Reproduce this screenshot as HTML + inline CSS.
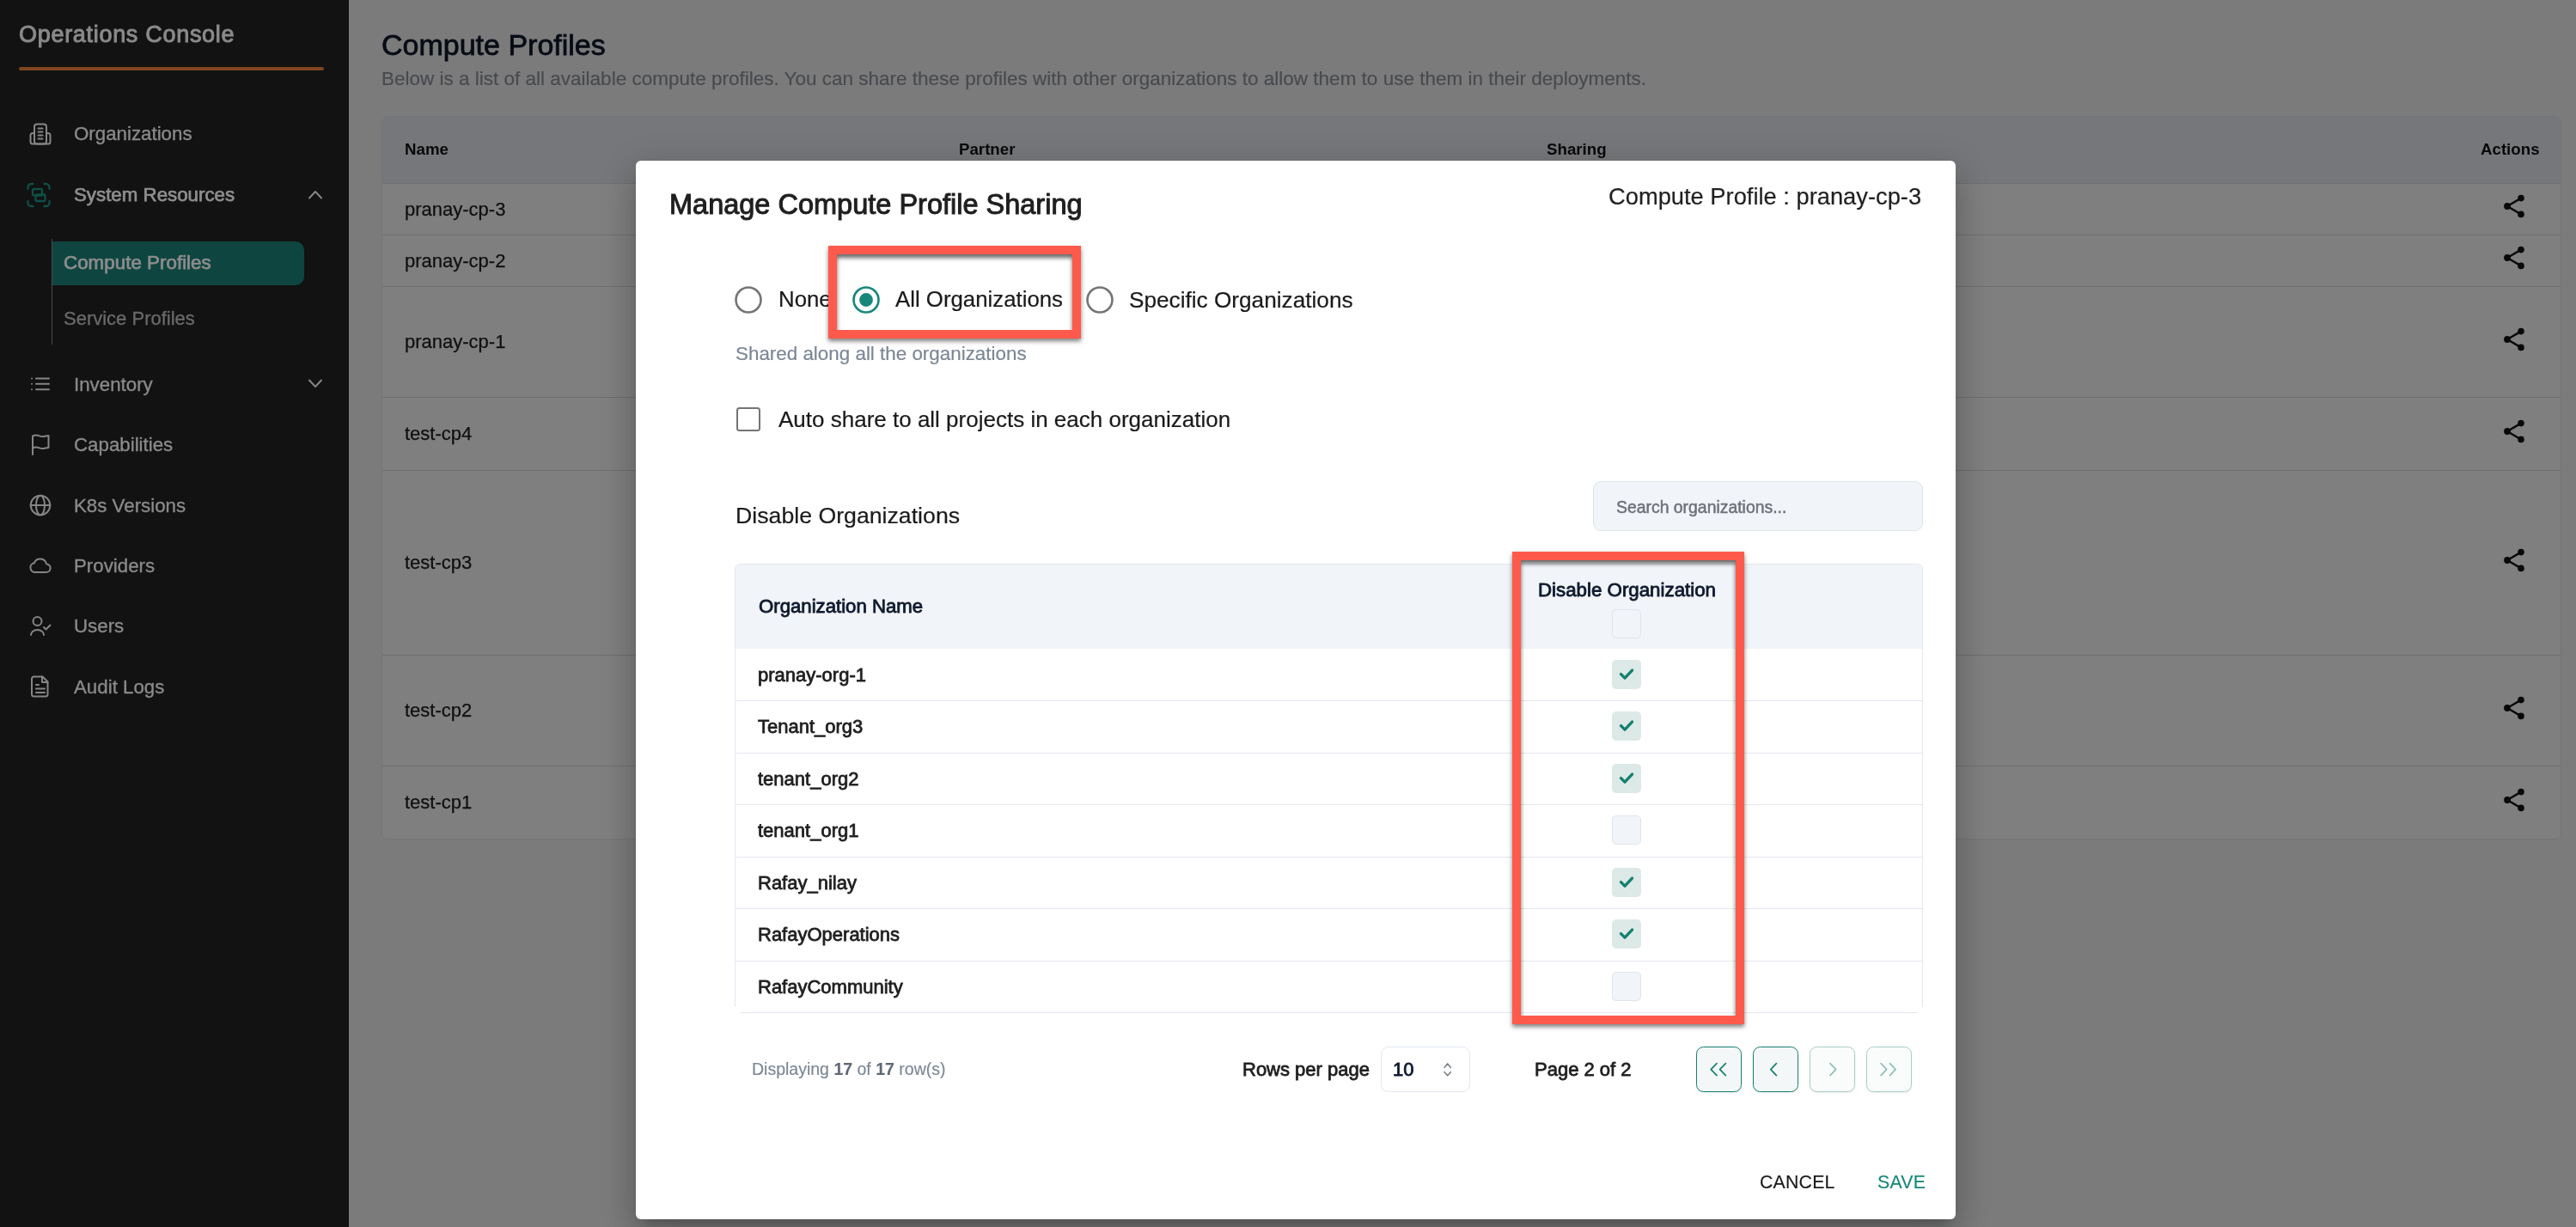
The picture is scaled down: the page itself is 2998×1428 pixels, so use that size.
<!DOCTYPE html>
<html><head><meta charset="utf-8">
<style>
*{box-sizing:border-box;margin:0;padding:0}
html,body{width:2998px;height:1428px;overflow:hidden;background:#fff;font-family:"Liberation Sans",sans-serif}
.t{position:absolute;line-height:1;white-space:nowrap;will-change:transform}
.ic{position:absolute;overflow:visible}
.hl{position:absolute;left:0;width:100%;height:1px;background:#dcdee2}
.cb{position:absolute;width:34px;height:34px;border-radius:5px}
.cb.off{background:#f1f4f8;border:1px solid #dfe5ec}
.cb.on{background:#dde9e6}
.rl{position:absolute;left:855px;width:1383px;height:1px;background:#e3e8ef}
.pb{position:absolute;top:1218px;width:53px;height:53px;border-radius:8.5px;border:1.5px solid #16806f;background:#f3f7f7;box-shadow:0 1px 2px rgba(0,0,0,.08)}
.pb.dis{border-color:#a6cfc8;background:#fafcfc}
.red{position:absolute;border:10px solid #fe5a4c;box-shadow:0 3px 5px rgba(0,0,0,.5),inset 0 4px 5px rgba(0,0,0,.6)}
</style></head><body>
<div style="position:absolute;left:0;top:0;width:406px;height:1428px;background:#121212"></div>
<div class="t" style="left:22px;top:26.65px;font-size:27px;color:#8a8a8a;-webkit-text-stroke:1.0px #8a8a8a;letter-spacing:0.7px;">Operations Console</div>
<div style="position:absolute;left:22px;top:78px;width:355px;height:4px;border-radius:2px;background:#7f4520"></div>
<svg class="ic" style="left:34px;top:143px" width="26" height="26" viewBox="0 0 26 26" fill="none" stroke="#858585" stroke-width="2" stroke-linecap="round" stroke-linejoin="round">
<rect x="6" y="1.5" width="14" height="23" rx="3"/>
<path d="M6 12 H4 a2.5 2.5 0 0 0 -2.5 2.5 V22 a2.5 2.5 0 0 0 2.5 2.5 H22 a2.5 2.5 0 0 0 2.5 -2.5 V14.5 a2.5 2.5 0 0 0 -2.5 -2.5 H20"/>
<path d="M10.5 6.5h5M10.5 10.5h5M10.5 14.5h5M10.5 18.5h5"/></svg>
<div class="t" style="left:86px;top:145.34px;font-size:22.3px;color:#8a8a8a;-webkit-text-stroke:0.35px #8a8a8a;">Organizations</div>
<svg class="ic" style="left:31px;top:213px" width="28" height="28" viewBox="0 0 28 28" fill="none" stroke="#0e4f46" stroke-width="2.3" stroke-linecap="round" stroke-linejoin="round">
<path d="M1.5 7V5a4 4 0 0 1 4-4h2M20.5 1h2a4 4 0 0 1 4 4v2M26.5 21v2a4 4 0 0 1-4 4h-2M7.5 27h-2a4 4 0 0 1-4-4v-2"/>
<rect x="7" y="7" width="11" height="7.5" rx="1.5"/><rect x="10.5" y="13.5" width="11" height="7.5" rx="1.5"/></svg>
<div class="t" style="left:86px;top:215.54px;font-size:22.3px;color:#8e8e8e;-webkit-text-stroke:0.75px #8e8e8e;">System Resources</div>
<svg class="ic" style="left:358px;top:220px" width="18" height="13" viewBox="0 0 18 13" fill="none" stroke="#858585" stroke-width="2" stroke-linecap="round" stroke-linejoin="round"><path d="M2 10.5 L9 3 L16 10.5"/></svg>
<div style="position:absolute;left:60px;top:278px;width:1px;height:123px;background:#4a4a4a"></div>
<div style="position:absolute;left:61px;top:281px;width:293px;height:50.5px;background:#0e4540;border-radius:0 10px 10px 0"></div>
<div class="t" style="left:74px;top:295.26px;font-size:22.4px;color:#8c8c8c;-webkit-text-stroke:0.75px #8c8c8c;">Compute Profiles</div>
<div class="t" style="left:74px;top:359.60px;font-size:22px;color:#6a6a6a;-webkit-text-stroke:0.3px #6a6a6a;">Service Profiles</div>
<svg class="ic" style="left:35px;top:437px" width="24" height="20" viewBox="0 0 24 20" fill="none" stroke="#858585" stroke-width="2" stroke-linecap="round">
<path d="M2 3.5h.01M2 9.7h.01M2 16.2h.01M7 3.5h15M7 9.7h15M7 16.2h15"/></svg>
<div class="t" style="left:86px;top:437.35px;font-size:22.3px;color:#8a8a8a;-webkit-text-stroke:0.35px #8a8a8a;">Inventory</div>
<svg class="ic" style="left:358px;top:440px" width="18" height="13" viewBox="0 0 18 13" fill="none" stroke="#858585" stroke-width="2" stroke-linecap="round" stroke-linejoin="round"><path d="M2 2.5 L9 10 L16 2.5"/></svg>
<svg class="ic" style="left:35px;top:504px" width="24" height="28" viewBox="0 0 24 28" fill="none" stroke="#858585" stroke-width="2" stroke-linecap="round" stroke-linejoin="round">
<path d="M3 25V3.5c5-2.5 8 .5 11 .5s5-1 7.5-1V17c-2.5 0-4.5 1-7.5 1s-6-3-11-.5"/></svg>
<div class="t" style="left:86px;top:506.55px;font-size:22.3px;color:#8a8a8a;-webkit-text-stroke:0.35px #8a8a8a;">Capabilities</div>
<svg class="ic" style="left:34px;top:575px" width="26" height="26" viewBox="0 0 26 26" fill="none" stroke="#858585" stroke-width="2" stroke-linecap="round">
<circle cx="13" cy="13" r="11.3"/><path d="M1.7 13h22.6"/><ellipse cx="13" cy="13" rx="5" ry="11.3"/></svg>
<div class="t" style="left:86px;top:577.64px;font-size:22.3px;color:#8a8a8a;-webkit-text-stroke:0.35px #8a8a8a;">K8s Versions</div>
<svg class="ic" style="left:34px;top:647px" width="26" height="22" viewBox="0 0 26 22" fill="none" stroke="#858585" stroke-width="2" stroke-linejoin="round">
<path d="M7 19h12.5a4.8 4.8 0 0 0 .6-9.6A7.5 7.5 0 0 0 5.8 8.3 5.4 5.4 0 0 0 7 19z"/></svg>
<div class="t" style="left:86px;top:647.54px;font-size:22.3px;color:#8a8a8a;-webkit-text-stroke:0.35px #8a8a8a;">Providers</div>
<svg class="ic" style="left:34px;top:715px" width="26" height="26" viewBox="0 0 26 26" fill="none" stroke="#858585" stroke-width="2" stroke-linecap="round" stroke-linejoin="round">
<circle cx="9.5" cy="8" r="5"/><path d="M2 24a7.5 6 0 0 1 15 0"/><path d="M17 15l2.5 2.5 5-5"/></svg>
<div class="t" style="left:86px;top:718.25px;font-size:22.3px;color:#8a8a8a;-webkit-text-stroke:0.35px #8a8a8a;">Users</div>
<svg class="ic" style="left:35px;top:785px" width="24" height="28" viewBox="0 0 24 28" fill="none" stroke="#858585" stroke-width="2" stroke-linecap="round" stroke-linejoin="round">
<path d="M4.5 2.5h10l6 6V23a2.5 2.5 0 0 1-2.5 2.5H4.5A2.5 2.5 0 0 1 2 23V5a2.5 2.5 0 0 1 2.5-2.5z"/><path d="M14 2.5V9h6.5"/><path d="M7 12h3M7 16.5h10M7 21h10"/></svg>
<div class="t" style="left:86px;top:788.84px;font-size:22.3px;color:#8a8a8a;-webkit-text-stroke:0.35px #8a8a8a;">Audit Logs</div>
<div style="position:absolute;left:406px;top:0;width:2592px;height:1428px;background:#f6f7f8"></div>
<div class="t" style="left:444px;top:35.40px;font-size:34px;color:#0f172a;-webkit-text-stroke:0.8px #0f172a;">Compute Profiles</div>
<div class="t" style="left:444px;top:80.88px;font-size:22.5px;color:#90949c;-webkit-text-stroke:0.2px #90949c;">Below is a list of all available compute profiles. You can share these profiles with other organizations to allow them to use them in their deployments.</div>
<div style="position:absolute;left:444px;top:135px;width:2537px;height:842px;border:1px solid #e2e8f0;border-radius:7px;overflow:hidden;background:#fff">
<div style="position:absolute;left:0;top:0;width:100%;height:78px;background:#edeff4"></div>
<div class="hl" style="top:77px"></div>
<div class="hl" style="top:137px"></div>
<div class="hl" style="top:197px"></div>
<div class="hl" style="top:326px"></div>
<div class="hl" style="top:411px"></div>
<div class="hl" style="top:626px"></div>
<div class="hl" style="top:755px"></div>
</div>
<div class="t" style="left:471px;top:165.10px;font-size:18.7px;color:#111;font-weight:700;">Name</div>
<div class="t" style="left:1116px;top:165.10px;font-size:18.7px;color:#111;font-weight:700;">Partner</div>
<div class="t" style="left:1800px;top:165.10px;font-size:18.7px;color:#111;font-weight:700;">Sharing</div>
<div class="t" style="left:2887px;top:165.10px;font-size:18.7px;color:#111;font-weight:700;">Actions</div>
<div class="t" style="left:471px;top:232.80px;font-size:22px;color:#1e1e1e;-webkit-text-stroke:0.25px #1e1e1e;">pranay-cp-3</div>
<svg class="ic" style="left:2910px;top:226px" width="30" height="28" viewBox="0 0 30 28"><g fill="#111"><circle cx="8" cy="14" r="3.9"/><circle cx="24" cy="4.6" r="3.8"/><circle cx="24" cy="23.4" r="3.8"/></g><path d="M8 14L24 4.6M8 14L24 23.4" stroke="#111" stroke-width="2.4"/></svg>
<div class="t" style="left:471px;top:292.80px;font-size:22px;color:#1e1e1e;-webkit-text-stroke:0.25px #1e1e1e;">pranay-cp-2</div>
<svg class="ic" style="left:2910px;top:286px" width="30" height="28" viewBox="0 0 30 28"><g fill="#111"><circle cx="8" cy="14" r="3.9"/><circle cx="24" cy="4.6" r="3.8"/><circle cx="24" cy="23.4" r="3.8"/></g><path d="M8 14L24 4.6M8 14L24 23.4" stroke="#111" stroke-width="2.4"/></svg>
<div class="t" style="left:471px;top:387.30px;font-size:22px;color:#1e1e1e;-webkit-text-stroke:0.25px #1e1e1e;">pranay-cp-1</div>
<svg class="ic" style="left:2910px;top:380.5px" width="30" height="28" viewBox="0 0 30 28"><g fill="#111"><circle cx="8" cy="14" r="3.9"/><circle cx="24" cy="4.6" r="3.8"/><circle cx="24" cy="23.4" r="3.8"/></g><path d="M8 14L24 4.6M8 14L24 23.4" stroke="#111" stroke-width="2.4"/></svg>
<div class="t" style="left:471px;top:494.30px;font-size:22px;color:#1e1e1e;-webkit-text-stroke:0.25px #1e1e1e;">test-cp4</div>
<svg class="ic" style="left:2910px;top:487.5px" width="30" height="28" viewBox="0 0 30 28"><g fill="#111"><circle cx="8" cy="14" r="3.9"/><circle cx="24" cy="4.6" r="3.8"/><circle cx="24" cy="23.4" r="3.8"/></g><path d="M8 14L24 4.6M8 14L24 23.4" stroke="#111" stroke-width="2.4"/></svg>
<div class="t" style="left:471px;top:644.30px;font-size:22px;color:#1e1e1e;-webkit-text-stroke:0.25px #1e1e1e;">test-cp3</div>
<svg class="ic" style="left:2910px;top:637.5px" width="30" height="28" viewBox="0 0 30 28"><g fill="#111"><circle cx="8" cy="14" r="3.9"/><circle cx="24" cy="4.6" r="3.8"/><circle cx="24" cy="23.4" r="3.8"/></g><path d="M8 14L24 4.6M8 14L24 23.4" stroke="#111" stroke-width="2.4"/></svg>
<div class="t" style="left:471px;top:816.30px;font-size:22px;color:#1e1e1e;-webkit-text-stroke:0.25px #1e1e1e;">test-cp2</div>
<svg class="ic" style="left:2910px;top:809.5px" width="30" height="28" viewBox="0 0 30 28"><g fill="#111"><circle cx="8" cy="14" r="3.9"/><circle cx="24" cy="4.6" r="3.8"/><circle cx="24" cy="23.4" r="3.8"/></g><path d="M8 14L24 4.6M8 14L24 23.4" stroke="#111" stroke-width="2.4"/></svg>
<div class="t" style="left:471px;top:923.30px;font-size:22px;color:#1e1e1e;-webkit-text-stroke:0.25px #1e1e1e;">test-cp1</div>
<svg class="ic" style="left:2910px;top:916.5px" width="30" height="28" viewBox="0 0 30 28"><g fill="#111"><circle cx="8" cy="14" r="3.9"/><circle cx="24" cy="4.6" r="3.8"/><circle cx="24" cy="23.4" r="3.8"/></g><path d="M8 14L24 4.6M8 14L24 23.4" stroke="#111" stroke-width="2.4"/></svg>
<div style="position:absolute;left:406px;top:0;width:2592px;height:1428px;background:rgba(0,0,0,0.5)"></div>
<div style="position:absolute;left:740px;top:187px;width:1536px;height:1232px;background:#fff;border-radius:6px;box-shadow:0 11px 15px -7px rgba(0,0,0,.2),0 24px 38px 3px rgba(0,0,0,.14),0 9px 46px 8px rgba(0,0,0,.12)"></div>
<div class="t" style="left:779px;top:221.88px;font-size:32.5px;color:#1f1f1f;-webkit-text-stroke:1.0px #1f1f1f;">Manage Compute Profile Sharing</div>
<div class="t" style="right:762px;top:214.80px;font-size:27.3px;color:#1f1f1f;-webkit-text-stroke:0.2px #1f1f1f;">Compute Profile : pranay-cp-3</div>
<svg class="ic" style="left:853px;top:331px" width="36" height="36" viewBox="0 0 36 36"><circle cx="18" cy="18" r="14.5" fill="none" stroke="#757575" stroke-width="2.6"/></svg>
<div class="t" style="left:906px;top:336.47px;font-size:25.8px;color:#1a1a1a;-webkit-text-stroke:0.2px #1a1a1a;">None</div>
<svg class="ic" style="left:990px;top:331px" width="36" height="36" viewBox="0 0 36 36"><circle cx="18" cy="18" r="14.5" fill="none" stroke="#17877a" stroke-width="2.6"/><circle cx="18" cy="18" r="7.9" fill="#17877a"/></svg>
<div class="t" style="left:1042px;top:336.47px;font-size:25.8px;color:#1a1a1a;-webkit-text-stroke:0.2px #1a1a1a;">All Organizations</div>
<svg class="ic" style="left:1262px;top:331px" width="36" height="36" viewBox="0 0 36 36"><circle cx="18" cy="18" r="14.5" fill="none" stroke="#757575" stroke-width="2.6"/></svg>
<div class="t" style="left:1314px;top:336.13px;font-size:26.2px;color:#1a1a1a;-webkit-text-stroke:0.2px #1a1a1a;">Specific Organizations</div>
<div class="t" style="left:856px;top:400.96px;font-size:22.4px;color:#7b8794;-webkit-text-stroke:0.2px #7b8794;">Shared along all the organizations</div>
<div style="position:absolute;left:857px;top:474px;width:28px;height:28px;border:2.6px solid #757575;border-radius:3.5px"></div>
<div class="t" style="left:906px;top:474.90px;font-size:26px;color:#1a1a1a;-webkit-text-stroke:0.2px #1a1a1a;">Auto share to all projects in each organization</div>
<div class="t" style="left:856px;top:587.30px;font-size:26.7px;color:#1a1a1a;-webkit-text-stroke:0.2px #1a1a1a;">Disable Organizations</div>
<div style="position:absolute;left:1854px;top:560px;width:384px;height:58px;border:1px solid #dee4eb;border-radius:9px;background:#f1f4f8"></div>
<div class="t" style="left:1881px;top:580.61px;font-size:19.4px;color:#6d7077;-webkit-text-stroke:0.45px #6d7077;">Search organizations...</div>
<div style="position:absolute;left:855px;top:656px;width:1383px;height:516px;border:1px solid #e2e8f0;border-bottom:none;border-radius:6px 6px 0 0;overflow:hidden;background:#fff"><div style="position:absolute;left:0;top:0;width:100%;height:98px;background:#f1f4f8"></div></div>
<div class="t" style="left:882px;top:774.75px;font-size:22px;color:#1f1f1f;-webkit-text-stroke:0.8px #1f1f1f;">pranay-org-1</div>
<div class="cb on" style="left:1876px;top:767.75px"><svg width="34" height="34" viewBox="0 0 34 34"><path d="M10.5 16.6l4.5 4.5 8.5-9" fill="none" stroke="#15806f" stroke-width="3.4" stroke-linecap="round" stroke-linejoin="round"/></svg></div>
<div class="rl" style="top:815.0px"></div>
<div class="t" style="left:882px;top:835.25px;font-size:22px;color:#1f1f1f;-webkit-text-stroke:0.8px #1f1f1f;">Tenant_org3</div>
<div class="cb on" style="left:1876px;top:828.25px"><svg width="34" height="34" viewBox="0 0 34 34"><path d="M10.5 16.6l4.5 4.5 8.5-9" fill="none" stroke="#15806f" stroke-width="3.4" stroke-linecap="round" stroke-linejoin="round"/></svg></div>
<div class="rl" style="top:875.5px"></div>
<div class="t" style="left:882px;top:895.75px;font-size:22px;color:#1f1f1f;-webkit-text-stroke:0.8px #1f1f1f;">tenant_org2</div>
<div class="cb on" style="left:1876px;top:888.75px"><svg width="34" height="34" viewBox="0 0 34 34"><path d="M10.5 16.6l4.5 4.5 8.5-9" fill="none" stroke="#15806f" stroke-width="3.4" stroke-linecap="round" stroke-linejoin="round"/></svg></div>
<div class="rl" style="top:936.0px"></div>
<div class="t" style="left:882px;top:956.25px;font-size:22px;color:#1f1f1f;-webkit-text-stroke:0.8px #1f1f1f;">tenant_org1</div>
<div class="cb off" style="left:1876px;top:949.25px"></div>
<div class="rl" style="top:996.5px"></div>
<div class="t" style="left:882px;top:1016.75px;font-size:22px;color:#1f1f1f;-webkit-text-stroke:0.8px #1f1f1f;">Rafay_nilay</div>
<div class="cb on" style="left:1876px;top:1009.75px"><svg width="34" height="34" viewBox="0 0 34 34"><path d="M10.5 16.6l4.5 4.5 8.5-9" fill="none" stroke="#15806f" stroke-width="3.4" stroke-linecap="round" stroke-linejoin="round"/></svg></div>
<div class="rl" style="top:1057.0px"></div>
<div class="t" style="left:882px;top:1077.25px;font-size:22px;color:#1f1f1f;-webkit-text-stroke:0.8px #1f1f1f;">RafayOperations</div>
<div class="cb on" style="left:1876px;top:1070.25px"><svg width="34" height="34" viewBox="0 0 34 34"><path d="M10.5 16.6l4.5 4.5 8.5-9" fill="none" stroke="#15806f" stroke-width="3.4" stroke-linecap="round" stroke-linejoin="round"/></svg></div>
<div class="rl" style="top:1117.5px"></div>
<div class="t" style="left:882px;top:1137.75px;font-size:22px;color:#1f1f1f;-webkit-text-stroke:0.8px #1f1f1f;">RafayCommunity</div>
<div class="cb off" style="left:1876px;top:1130.75px"></div>
<div style="position:absolute;left:861px;top:1178px;width:1371px;height:1px;background:#e3e8ef"></div>
<div class="t" style="left:882.5px;top:695.13px;font-size:22.2px;color:#0f1a2e;-webkit-text-stroke:0.85px #0f1a2e;">Organization Name</div>
<div class="t" style="left:1789.5px;top:675.54px;font-size:22.3px;color:#0f1a2e;-webkit-text-stroke:0.85px #0f1a2e;">Disable Organization</div>
<div class="cb off" style="left:1876px;top:709px"></div>
<div class="t" style="left:875px;top:1235.42px;font-size:19.5px;color:#7b8794;-webkit-text-stroke:0.15px #7b8794;">Displaying <b style="color:#5f6875;font-weight:700">17</b> of <b style="color:#5f6875;font-weight:700">17</b> row(s)</div>
<div class="t" style="left:1446px;top:1233.60px;font-size:22px;color:#1f1f1f;-webkit-text-stroke:0.8px #1f1f1f;">Rows per page</div>
<div style="position:absolute;left:1607px;top:1218px;width:104px;height:53px;border:1px solid #e2e8f0;border-radius:9px"></div>
<div class="t" style="left:1621px;top:1233.50px;font-size:22px;color:#0f1a2e;-webkit-text-stroke:0.8px #0f1a2e;">10</div>
<svg class="ic" style="left:1677px;top:1234px" width="16" height="22" viewBox="0 0 16 22" fill="none" stroke="#7a7f87" stroke-width="1.6" stroke-linecap="round" stroke-linejoin="round"><path d="M4.1 8.3L7.7 3.9l3.6 4.4M4.1 13.7L7.7 17.7l3.6-4"/></svg>
<div class="t" style="left:1786px;top:1233.60px;font-size:22px;color:#1f1f1f;-webkit-text-stroke:0.8px #1f1f1f;">Page 2 of 2</div>
<div class="pb" style="left:1974px"><svg style="position:absolute;left:-1.5px;top:-1.5px" width="52" height="52" viewBox="0 0 52 52" fill="none" stroke="#16806f" stroke-width="1.7" stroke-linecap="round" stroke-linejoin="round"><path d="M24 19.6L17.2 26.6L24 33.6M34.4 19.6L27.6 26.6L34.4 33.6"/></svg></div>
<div class="pb" style="left:2040px"><svg style="position:absolute;left:-1.5px;top:-1.5px" width="52" height="52" viewBox="0 0 52 52" fill="none" stroke="#16806f" stroke-width="1.7" stroke-linecap="round" stroke-linejoin="round"><path d="M27.4 19.6L20.8 26.6L27.4 33.6"/></svg></div>
<div class="pb dis" style="left:2106px"><svg style="position:absolute;left:-1.5px;top:-1.5px" width="52" height="52" viewBox="0 0 52 52" fill="none" stroke="#8cc1b8" stroke-width="1.7" stroke-linecap="round" stroke-linejoin="round"><path d="M24 19.6L30.6 26.6L24 33.6"/></svg></div>
<div class="pb dis" style="left:2172px"><svg style="position:absolute;left:-1.5px;top:-1.5px" width="52" height="52" viewBox="0 0 52 52" fill="none" stroke="#8cc1b8" stroke-width="1.7" stroke-linecap="round" stroke-linejoin="round"><path d="M17.1 19.6L23.7 26.6L17.1 33.6M27.5 19.6L34.1 26.6L27.5 33.6"/></svg></div>
<div class="t" style="left:2048px;top:1365.69px;font-size:21.3px;color:#1a1a1a;-webkit-text-stroke:0.15px #1a1a1a;letter-spacing:0.2px;">CANCEL</div>
<div class="t" style="left:2185px;top:1365.69px;font-size:21.3px;color:#17877a;-webkit-text-stroke:0.15px #17877a;letter-spacing:0.2px;">SAVE</div>
<div class="red" style="left:964px;top:286px;width:294px;height:108px"></div>
<div class="red" style="left:1760px;top:642px;width:270px;height:550px"></div>
</body></html>
